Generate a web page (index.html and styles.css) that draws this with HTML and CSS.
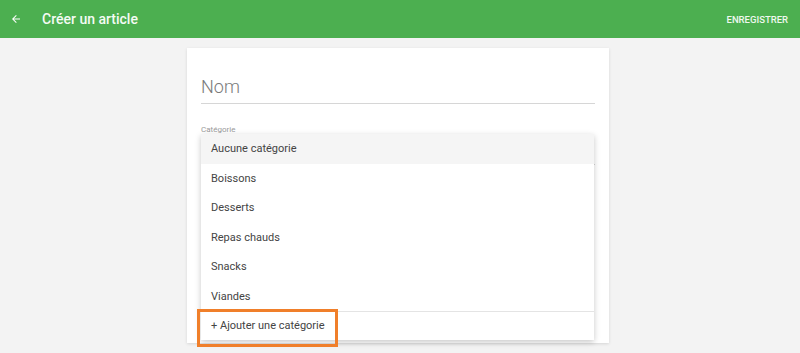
FILE: index.html
```html
<!DOCTYPE html>
<html lang="fr">
<head>
  <meta charset="UTF-8" />
  <meta name="viewport" content="width=device-width, initial-scale=1.0"/>
  <title>Créer un article</title>
  <link rel="stylesheet" href="styles.css">
</head>
<body>
  <header class="toolbar">
    <button class="back-btn" aria-label="Retour">
      <svg width="12" height="12" viewBox="0 0 24 24"><path d="M20 11H7.83l5.59-5.59L12 4l-8 8 8 8 1.41-1.41L7.83 13H20v-2z" fill="#fff"/></svg>
    </button>
    <h1 class="title">Créer un article</h1>
    <button class="save-btn">ENREGISTRER</button>
  </header>

  <main class="page">
    <div class="card">
      <div class="field name-field">
        <input type="text" placeholder="Nom" />
      </div>
      <div class="field select-field">
        <label>Catégorie</label>
        <div class="select-value"></div>
      </div>

      <ul class="menu">
        <li class="menu-item active">Aucune catégorie</li>
        <li class="menu-item">Boissons</li>
        <li class="menu-item">Desserts</li>
        <li class="menu-item">Repas chauds</li>
        <li class="menu-item">Snacks</li>
        <li class="menu-item">Viandes</li>
        <li class="menu-item add-item"><span class="highlight">+ Ajouter une catégorie</span></li>
      </ul>
    </div>
  </main>
</body>
</html>
```

FILE: styles.css
```css
body {
  font-family: Roboto, 'Liberation Sans', sans-serif;
  background-color: #f3f3f3;
  margin: 0;
  padding: 0;
  height: 353px;
  overflow: hidden;
}

.toolbar {
  height: 38px;
  background-color: #4caf50;
  display: flex;
  align-items: center;
  padding: 0 12px 0 8px;
  color: #fff;
}

.back-btn {
  background: none;
  border: none;
  padding: 0;
  width: 14px;
  height: 14px;
  margin-left: 1px;
  display: flex;
  align-items: center;
  justify-content: center;
}

.title {
  font-size: 14px;
  font-weight: 500;
  margin: 0 0 0 19px;
  flex: 1;
  color: #f4fbf4;
}

.save-btn {
  background: none;
  border: none;
  color: #eef8ee;
  font-family: inherit;
  font-size: 9.5px;
  font-weight: 500;
  padding: 0;
}

.page {
  padding-top: 10px;
}

.card {
  position: relative;
  width: 422px;
  height: 295px;
  margin: 0 0 0 187px;
  background: #fff;
  box-shadow: 0 1px 3px rgba(0, 0, 0, 0.12);
  box-sizing: border-box;
  padding: 28px 14px 0 14px;
}

.field input {
  width: 100%;
  box-sizing: border-box;
  border: none;
  border-bottom: 1px solid #d6d6d6;
  font-family: inherit;
  font-size: 18px;
  font-weight: 300;
  padding: 0 0 6px 0;
  outline: none;
}

.field input::placeholder {
  color: #7a7a7a;
}

.select-field {
  margin-top: 21px;
}

.select-field label {
  font-size: 8px;
  color: #9a9a9a;
  display: block;
}

.select-value {
  height: 30px;
  border-bottom: 1px solid #d6d6d6;
}

.menu {
  position: absolute;
  top: 86px;
  left: 14px;
  right: 15px;
  margin: 0;
  padding: 0;
  list-style: none;
  background: #fff;
  box-shadow: 0 2px 6px rgba(0, 0, 0, 0.22);
}

.menu-item {
  height: 29.5px;
  line-height: 29.5px;
  padding: 0 10px;
  font-size: 11px;
  color: #444;
}

.menu-item.active {
  background-color: #f5f5f5;
}

.add-item {
  position: relative;
  border-top: 1px solid #e4e4e4;
  height: 28px;
  line-height: 28px;
}

.highlight::after {
  content: "";
  position: absolute;
  left: -4px;
  top: -3px;
  width: 135px;
  height: 32px;
  border: 3px solid #f07f2a;
}
```
